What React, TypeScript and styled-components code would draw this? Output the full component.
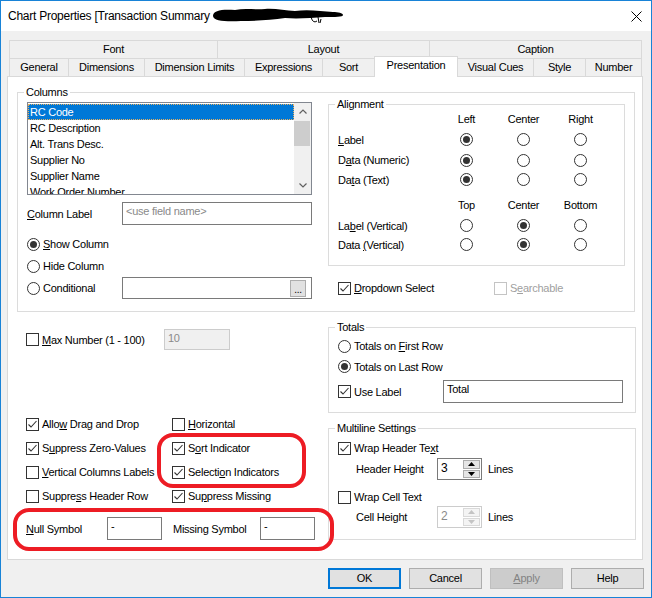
import React from 'react';
import type { ReactNode } from 'react';
import styled, { createGlobalStyle, css } from 'styled-components';

const GlobalStyle = createGlobalStyle`
  html, body {
    margin: 0;
    padding: 0;
    background: #ffffff;
  }
  body {
    font-family: "Liberation Sans", Arial, sans-serif;
    font-size: 11px;
    color: #000;
  }
`;

// ---- window chrome ----

const Window = styled.div`
  position: relative;
  box-sizing: border-box;
  width: 652px;
  height: 598px;
  border: 1px solid #1883d7;
  background: #f0f0f0;
  display: flex;
  flex-direction: column;
  letter-spacing: -0.25px;
`;

const TitleBar = styled.div`
  flex: none;
  height: 30px;
  background: #fff;
  display: flex;
  align-items: center;
  padding: 0 9px 0 7px;
  font-size: 12px;
`;

const Title = styled.span`
  white-space: nowrap;
`;

const Close = styled.div`
  margin-left: auto;
  display: flex;
`;

const Client = styled.div`
  flex: 1;
  display: flex;
  flex-direction: column;
  padding: 9px 0 0 6px;
`;

// ---- tabs ----

const TabStrip = styled.div`
  width: 633px;
  margin-left: 2px;
`;

const TabRow = styled.div`
  display: flex;
  height: 18px;
`;

const Tab = styled.div<{ $w: number; $active?: boolean }>`
  box-sizing: border-box;
  flex: none;
  width: ${p => p.$w}px;
  height: 18px;
  border: 1px solid #d9d9d9;
  border-bottom: none;
  background: #f0f0f0;
  line-height: 17px;
  text-align: center;
  white-space: nowrap;

  & + & {
    margin-left: -1px;
  }

  ${p =>
    p.$active &&
    css`
      position: relative;
      z-index: 2;
      height: 21px;
      margin-top: -2px;
      background: #fff;
      line-height: 17px;
    `}
`;

const Panel = styled.div`
  box-sizing: border-box;
  width: 636px;
  height: 484px;
  background: #fff;
  border: 1px solid #d9d9d9;
  padding: 15px 0 0 9px;
`;

// ---- group boxes ----

const GroupBox = styled.div<{ $w: number; $h: number }>`
  position: relative;
  box-sizing: border-box;
  flex: none;
  width: ${p => p.$w}px;
  height: ${p => p.$h}px;
  border: 1px solid #dcdcdc;
`;

const GroupLabel = styled.span`
  position: absolute;
  top: -8px;
  left: 6px;
  padding: 0 2px;
  background: #fff;
  line-height: 14px;
  white-space: nowrap;
`;

const ColumnsBody = styled.div`
  display: flex;
  padding: 9px 0 0 9px;
`;

const LeftCol = styled.div`
  width: 285px;
  display: flex;
  flex-direction: column;
`;

const RightCol = styled.div`
  margin: 2px 0 0 16px;
  display: flex;
  flex-direction: column;
`;

// ---- list box ----

const ListBox = styled.div`
  box-sizing: border-box;
  display: flex;
  width: 285px;
  height: 93px;
  border: 1px solid #828790;
  background: #fff;
`;

const ListItems = styled.div`
  flex: 1;
  overflow: hidden;
  padding-top: 1px;
`;

const ListItem = styled.div<{ $selected?: boolean }>`
  height: 16px;
  line-height: 16px;
  padding-left: 2px;
  white-space: nowrap;
  ${p =>
    p.$selected &&
    css`
      background: #0078d7;
      color: #fff;
      outline: 1px dotted #e8b060;
      outline-offset: -1px;
    `}
`;

const ScrollBar = styled.div`
  width: 17px;
  background: #f0f0f0;
  display: flex;
  flex-direction: column;
`;

const ScrollArrow = styled.div`
  height: 17px;
  display: flex;
  align-items: center;
  justify-content: center;
`;

const ScrollTrack = styled.div`
  flex: 1;
  padding: 1px 1px 0 0;
`;

const ScrollThumb = styled.div`
  height: 25px;
  background: #cdcdcd;
`;

// ---- generic form parts ----

const Row = styled.div<{ $h?: number; $mt?: number; $pl?: number }>`
  display: flex;
  align-items: center;
  height: ${p => p.$h ?? 20}px;
  margin-top: ${p => p.$mt ?? 0}px;
  padding-left: ${p => p.$pl ?? 0}px;
`;

const FieldLabel = styled.span<{ $w: number; $ml?: number }>`
  flex: none;
  width: ${p => p.$w}px;
  margin-left: ${p => p.$ml ?? 0}px;
  white-space: nowrap;
`;

const TextBox = styled.div<{ $w: number; $h?: number; $disabled?: boolean; $placeholder?: boolean }>`
  box-sizing: border-box;
  flex: none;
  width: ${p => p.$w}px;
  height: ${p => p.$h ?? 23}px;
  border: 1px solid ${p => (p.$disabled ? '#cccccc' : '#7a7a7a')};
  background: ${p => (p.$disabled ? '#f0f0f0' : '#fff')};
  color: ${p => (p.$disabled || p.$placeholder ? '#8a8a8a' : '#000')};
  padding: 1px 3px;
  line-height: 14px;
  white-space: nowrap;
  display: flex;
`;

const EllipsisButton = styled.div`
  box-sizing: border-box;
  margin: 1px 2px 0 auto;
  width: 16px;
  height: 17px;
  background: #e1e1e1;
  border: 1px solid #adadad;
  text-align: center;
  line-height: 18px;
  font-size: 10px;
`;

const Option = styled.label<{ $w?: number; $disabled?: boolean }>`
  flex: none;
  display: flex;
  align-items: center;
  gap: 3px;
  width: ${p => (p.$w ? `${p.$w}px` : 'auto')};
  color: ${p => (p.$disabled ? '#a0a0a0' : '#000')};
  white-space: nowrap;
`;

const Box = styled.span<{ $disabled?: boolean }>`
  box-sizing: border-box;
  flex: none;
  width: 13px;
  height: 13px;
  border: 1px solid ${p => (p.$disabled ? '#c4c4c4' : '#333333')};
  background: #fff;
  display: flex;
  align-items: center;
  justify-content: center;
`;

const Circle = styled.span<{ $on?: boolean }>`
  box-sizing: border-box;
  flex: none;
  width: 13px;
  height: 13px;
  border-radius: 50%;
  border: 1px solid #333333;
  background: #fff;
  display: flex;
  align-items: center;
  justify-content: center;

  &::after {
    content: '';
    display: ${p => (p.$on ? 'block' : 'none')};
    width: 7px;
    height: 7px;
    border-radius: 50%;
    background: #333333;
  }
`;

const U = styled.span`
  text-decoration: underline;
  text-underline-offset: 1px;
`;

// ---- alignment grid ----

const AlignGrid = styled.div<{ $rows: string; $mt?: number }>`
  display: grid;
  grid-template-columns: 100px 57px 57px 57px;
  grid-template-rows: ${p => p.$rows};
  align-items: center;
  margin-top: ${p => p.$mt ?? 0}px;
`;

const ColHead = styled.div`
  text-align: center;
`;

const Cell = styled.div`
  display: flex;
  justify-content: center;
`;

// ---- lower part ----

const Lower = styled.div`
  display: flex;
`;

const LowerLeft = styled.div`
  box-sizing: border-box;
  width: 311px;
  padding-left: 9px;
  display: flex;
  flex-direction: column;
`;

const LowerRight = styled.div`
  display: flex;
  flex-direction: column;
  gap: 15px;
  padding-top: 15px;
`;

const CheckGrid = styled.div`
  display: grid;
  grid-template-columns: 146px 1fr;
  grid-auto-rows: 24px;
  align-items: center;
  margin-top: 62px;
`;

const BoxBody = styled.div<{ $pt: number }>`
  padding: ${p => p.$pt}px 0 0 9px;
  display: flex;
  flex-direction: column;
`;

// ---- spinner ----

const SpinBox = styled.div<{ $disabled?: boolean }>`
  box-sizing: border-box;
  flex: none;
  display: flex;
  width: 45px;
  height: 22px;
  border: 1px solid ${p => (p.$disabled ? '#cccccc' : '#7a7a7a')};
  background: #fff;
`;

const SpinValue = styled.div<{ $disabled?: boolean }>`
  flex: 1;
  padding: 2px 0 0 3px;
  color: ${p => (p.$disabled ? '#8a8a8a' : '#000')};
  font-size: 12px;
`;

const SpinButtons = styled.div`
  width: 18px;
  display: flex;
  flex-direction: column;
  gap: 1px;
  padding: 1px 1px 1px 0;
  box-sizing: border-box;
`;

const SpinButton = styled.div<{ $disabled?: boolean }>`
  flex: 1;
  box-sizing: border-box;
  background: ${p => (p.$disabled ? '#f4f4f4' : '#e5e5e5')};
  border: 1px solid ${p => (p.$disabled ? '#d9d9d9' : '#acacac')};
  display: flex;
  align-items: center;
  justify-content: center;
`;

// ---- buttons ----

const ButtonRow = styled.div`
  display: flex;
  justify-content: flex-end;
  gap: 8px;
  width: 637px;
  margin-top: 8px;
`;

const Button = styled.div<{ $default?: boolean; $disabled?: boolean }>`
  box-sizing: border-box;
  width: 73px;
  height: 21px;
  background: ${p => (p.$disabled ? '#cccccc' : '#e1e1e1')};
  border: 1px solid ${p => (p.$default ? '#0078d7' : p.$disabled ? '#bfbfbf' : '#adadad')};
  box-shadow: ${p => (p.$default ? 'inset 0 0 0 1px #0078d7' : 'none')};
  color: ${p => (p.$disabled ? '#838383' : '#000')};
  text-align: center;
  line-height: 19px;
`;

// ---- red annotation marks over the screenshot ----

const Mark = styled.div<{ $x: number; $y: number; $w: number; $h: number }>`
  position: absolute;
  left: ${p => p.$x}px;
  top: ${p => p.$y}px;
  width: ${p => p.$w}px;
  height: ${p => p.$h}px;
  box-sizing: border-box;
  border: 4px solid #ed1c24;
  border-radius: 16px;
  pointer-events: none;
`;

const Redaction = styled.svg`
  margin-left: 1px;
  flex: none;
`;

// ---- small pieces ----

function Check({ on, disabled }: { on?: boolean; disabled?: boolean }) {
  return (
    <Box $disabled={disabled}>
      {on && (
        <svg width="11" height="11" viewBox="0 0 11 11">
          <path d="M1.5 5.5 L4 8 L9.5 2" fill="none" stroke="#333" strokeWidth="1.1" />
        </svg>
      )}
    </Box>
  );
}

function CheckOption({ on, disabled, w, children }: { on?: boolean; disabled?: boolean; w?: number; children: ReactNode }) {
  return (
    <Option $w={w} $disabled={disabled}>
      <Check on={on} disabled={disabled} />
      <span>{children}</span>
    </Option>
  );
}

function RadioOption({ on, w, children }: { on?: boolean; w?: number; children: ReactNode }) {
  return (
    <Option $w={w}>
      <Circle $on={on} />
      <span>{children}</span>
    </Option>
  );
}

function Chevron({ down }: { down?: boolean }) {
  return (
    <svg width="8" height="5" viewBox="0 0 8 5">
      <path d={down ? 'M0.5 0.5 L4 4 L7.5 0.5' : 'M0.5 4.5 L4 1 L7.5 4.5'} fill="none" stroke="#606060" strokeWidth="1.2" />
    </svg>
  );
}

function Triangle({ down, color }: { down?: boolean; color: string }) {
  return (
    <svg width="7" height="4" viewBox="0 0 7 4">
      <path d={down ? 'M0 0 H7 L3.5 4 Z' : 'M0 4 H7 L3.5 0 Z'} fill={color} />
    </svg>
  );
}

function Spinner({ value, disabled }: { value: string; disabled?: boolean }) {
  const c = disabled ? '#c4c4c4' : '#000';
  return (
    <SpinBox $disabled={disabled}>
      <SpinValue $disabled={disabled}>{value}</SpinValue>
      <SpinButtons>
        <SpinButton $disabled={disabled}>
          <Triangle color={c} />
        </SpinButton>
        <SpinButton $disabled={disabled}>
          <Triangle down color={c} />
        </SpinButton>
      </SpinButtons>
    </SpinBox>
  );
}

const TOP_TABS = [
  { label: 'Font', w: 209 },
  { label: 'Layout', w: 213 },
  { label: 'Caption', w: 213 },
];

const TABS = [
  { label: 'General', w: 60 },
  { label: 'Dimensions', w: 77 },
  { label: 'Dimension Limits', w: 101 },
  { label: 'Expressions', w: 79 },
  { label: 'Sort', w: 53 },
  { label: 'Presentation', w: 84, active: true },
  { label: 'Visual Cues', w: 77 },
  { label: 'Style', w: 53 },
  { label: 'Number', w: 57 },
];

const COLUMNS = ['RC Code', 'RC Description', 'Alt. Trans Desc.', 'Supplier No', 'Supplier Name', 'Work Order Number'];

export default function App() {
  return (
    <>
      <GlobalStyle />
      <Window>
        <TitleBar>
          <Title>Chart Properties [Transaction Summary</Title>
          <Redaction width="134" height="22" viewBox="0 0 134 22">
            <path
              d="M2 11 C2 5 12 4 24 5 C34 3 44 5 54 4 C64 3 74 6 84 6 C96 4 110 6 122 7 C127 7 132 8 132 10 C132 12 124 12 114 12 C100 13 86 14 74 13 C60 15 44 16 30 16 C16 17 2 16 2 11 Z"
              fill="#000"
            />
            <path d="M100 12 q2 7 6 4 M107 12 l1 6 M110 14 l-1 4" fill="none" stroke="#000" strokeWidth="1" />
          </Redaction>
          <Close>
            <svg width="11" height="11" viewBox="0 0 11 11">
              <path d="M0.5 0.5 L10.5 10.5 M10.5 0.5 L0.5 10.5" stroke="#000" strokeWidth="1" />
            </svg>
          </Close>
        </TitleBar>

        <Client>
          <TabStrip>
            <TabRow>
              {TOP_TABS.map(t => (
                <Tab key={t.label} $w={t.w}>
                  {t.label}
                </Tab>
              ))}
            </TabRow>
            <TabRow>
              {TABS.map(t => (
                <Tab key={t.label} $w={t.w} $active={t.active}>
                  {t.label}
                </Tab>
              ))}
            </TabRow>
          </TabStrip>

          <Panel>
            <GroupBox $w={618} $h={220}>
              <GroupLabel>Columns</GroupLabel>
              <ColumnsBody>
                <LeftCol>
                  <ListBox>
                    <ListItems>
                      {COLUMNS.map((c, i) => (
                        <ListItem key={c} $selected={i === 0}>
                          {c}
                        </ListItem>
                      ))}
                    </ListItems>
                    <ScrollBar>
                      <ScrollArrow>
                        <Chevron />
                      </ScrollArrow>
                      <ScrollTrack>
                        <ScrollThumb />
                      </ScrollTrack>
                      <ScrollArrow>
                        <Chevron down />
                      </ScrollArrow>
                    </ScrollBar>
                  </ListBox>

                  <Row $h={23} $mt={7}>
                    <FieldLabel $w={95}>
                      <U>C</U>olumn Label
                    </FieldLabel>
                    <TextBox $w={190} $placeholder>
                      &lt;use field name&gt;
                    </TextBox>
                  </Row>

                  <Row $h={22} $mt={8}>
                    <RadioOption on>
                      <U>S</U>how Column
                    </RadioOption>
                  </Row>
                  <Row $h={22}>
                    <RadioOption>Hide Column</RadioOption>
                  </Row>
                  <Row $h={22}>
                    <RadioOption w={95}>Conditional</RadioOption>
                    <TextBox $w={190} $h={22}>
                      <EllipsisButton>...</EllipsisButton>
                    </TextBox>
                  </Row>
                </LeftCol>

                <RightCol>
                  <GroupBox $w={297} $h={162}>
                    <GroupLabel>Alignment</GroupLabel>
                    <BoxBody $pt={4}>
                      <AlignGrid $rows="20px 21px 20px 19px">
                        <span />
                        <ColHead>Left</ColHead>
                        <ColHead>Center</ColHead>
                        <ColHead>Right</ColHead>

                        <span>
                          <U>L</U>abel
                        </span>
                        <Cell><Circle $on /></Cell>
                        <Cell><Circle /></Cell>
                        <Cell><Circle /></Cell>

                        <span>
                          D<U>a</U>ta (Numeric)
                        </span>
                        <Cell><Circle $on /></Cell>
                        <Cell><Circle /></Cell>
                        <Cell><Circle /></Cell>

                        <span>
                          Da<U>t</U>a (Text)
                        </span>
                        <Cell><Circle $on /></Cell>
                        <Cell><Circle /></Cell>
                        <Cell><Circle /></Cell>
                      </AlignGrid>

                      <AlignGrid $rows="20px 21px 17px" $mt={6}>
                        <span />
                        <ColHead>Top</ColHead>
                        <ColHead>Center</ColHead>
                        <ColHead>Bottom</ColHead>

                        <span>
                          La<U>b</U>el (Vertical)
                        </span>
                        <Cell><Circle /></Cell>
                        <Cell><Circle $on /></Cell>
                        <Cell><Circle /></Cell>

                        <span>
                          Data <U>(</U>Vertical)
                        </span>
                        <Cell><Circle /></Cell>
                        <Cell><Circle $on /></Cell>
                        <Cell><Circle /></Cell>
                      </AlignGrid>
                    </BoxBody>
                  </GroupBox>

                  <Row $mt={12} $pl={10}>
                    <CheckOption on w={156}>
                      <U>D</U>ropdown Select
                    </CheckOption>
                    <CheckOption disabled>
                      S<U>e</U>archable
                    </CheckOption>
                  </Row>
                </RightCol>
              </ColumnsBody>
            </GroupBox>

            <Lower>
              <LowerLeft>
                <Row $h={21} $mt={17}>
                  <CheckOption w={138}>
                    <U>M</U>ax Number (1 - 100)
                  </CheckOption>
                  <TextBox $w={66} $h={21} $disabled>
                    10
                  </TextBox>
                </Row>

                <CheckGrid>
                  <CheckOption on>
                    Allo<U>w</U> Drag and Drop
                  </CheckOption>
                  <CheckOption>
                    <U>H</U>orizontal
                  </CheckOption>
                  <CheckOption on>
                    S<U>u</U>ppress Zero-Values
                  </CheckOption>
                  <CheckOption on>
                    S<U>o</U>rt Indicator
                  </CheckOption>
                  <CheckOption>
                    <U>V</U>ertical Columns Labels
                  </CheckOption>
                  <CheckOption on>
                    Selecti<U>o</U>n Indicators
                  </CheckOption>
                  <CheckOption>
                    Suppre<U>s</U>s Header Row
                  </CheckOption>
                  <CheckOption on>
                    Su<U>p</U>press Missing
                  </CheckOption>
                </CheckGrid>

                <Row $h={23} $mt={9}>
                  <FieldLabel $w={81}>
                    <U>N</U>ull Symbol
                  </FieldLabel>
                  <TextBox $w={55}>-</TextBox>
                  <FieldLabel $w={87} $ml={11}>
                    Missin<U>g</U> Symbol
                  </FieldLabel>
                  <TextBox $w={55}>-</TextBox>
                </Row>
              </LowerLeft>

              <LowerRight>
                <GroupBox $w={308} $h={86}>
                  <GroupLabel>Totals</GroupLabel>
                  <BoxBody $pt={8}>
                    <Row>
                      <RadioOption>
                        Totals on <U>F</U>irst Row
                      </RadioOption>
                    </Row>
                    <Row $h={21}>
                      <RadioOption on>Totals on Last Row</RadioOption>
                    </Row>
                    <Row $h={23} $mt={3}>
                      <CheckOption on w={105}>
                        Use Label
                      </CheckOption>
                      <TextBox $w={180}>Total</TextBox>
                    </Row>
                  </BoxBody>
                </GroupBox>

                <GroupBox $w={308} $h={112}>
                  <GroupLabel>Multiline Settings</GroupLabel>
                  <BoxBody $pt={9}>
                    <Row>
                      <CheckOption on>
                        Wrap Header Te<U>x</U>t
                      </CheckOption>
                    </Row>
                    <Row $h={22} $pl={18}>
                      <FieldLabel $w={81}>Header Height</FieldLabel>
                      <Spinner value="3" />
                      <FieldLabel $w={40} $ml={6}>
                        Lines
                      </FieldLabel>
                    </Row>
                    <Row $h={18} $mt={8}>
                      <CheckOption>Wrap Cell Text</CheckOption>
                    </Row>
                    <Row $h={22} $pl={18}>
                      <FieldLabel $w={81}>Cell Height</FieldLabel>
                      <Spinner value="2" disabled />
                      <FieldLabel $w={40} $ml={6}>
                        Lines
                      </FieldLabel>
                    </Row>
                  </BoxBody>
                </GroupBox>
              </LowerRight>
            </Lower>
          </Panel>

          <ButtonRow>
            <Button $default>OK</Button>
            <Button>Cancel</Button>
            <Button $disabled>
              <U>A</U>pply
            </Button>
            <Button>Help</Button>
          </ButtonRow>
        </Client>

        <Mark $x={156} $y={432} $w={149} $h={55} />
        <Mark $x={12} $y={507} $w={321} $h={43} />
      </Window>
    </>
  );
}
